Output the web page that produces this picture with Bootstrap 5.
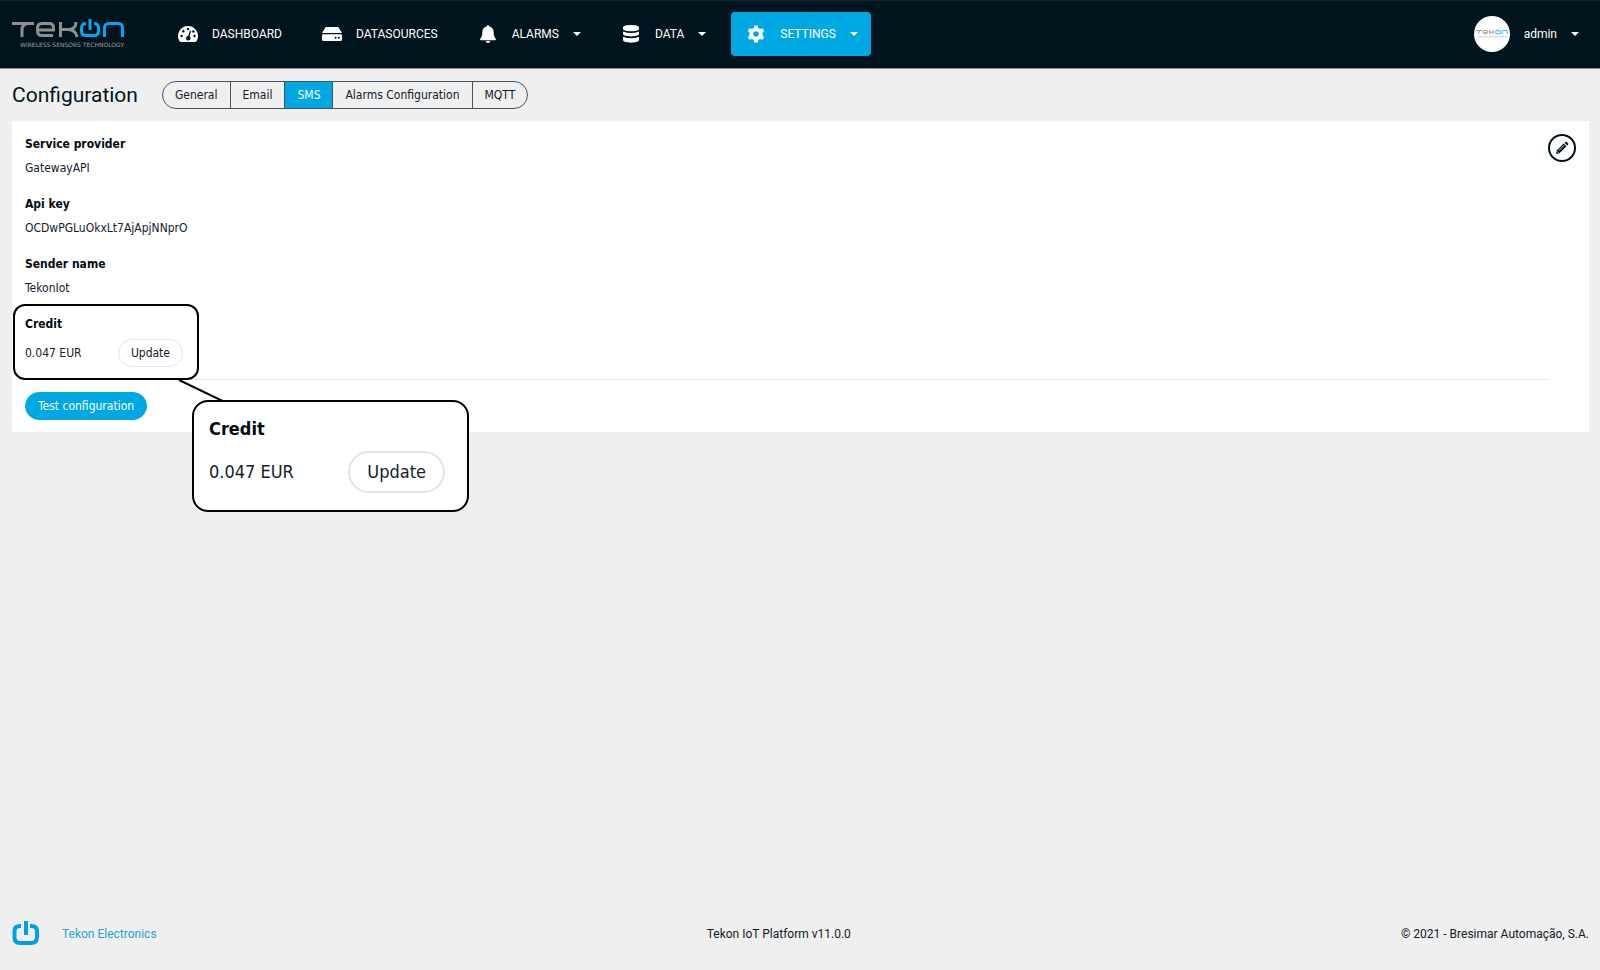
<!DOCTYPE html>
<html lang="en">
<head>
<meta charset="utf-8">
<meta name="viewport" content="width=device-width, initial-scale=1">
<title>Tekon IoT Platform</title>
<link href="https://cdn.jsdelivr.net/npm/bootstrap@5.3.0/dist/css/bootstrap.min.css" rel="stylesheet">
<style>
  :root { --tk-blue: #00a8e3; --tk-dark: #00141d; --tk-font: "DejaVu Sans Condensed", Tahoma, sans-serif; }
  body { background: #efefef; color: #10212b; font: 12px/20px Roboto, sans-serif; }
  .tk-nav { background: var(--tk-dark); min-height: 68px; padding: 0 21px 0 12px; box-shadow: inset 0 1px 0 #0e2631, 0 1px 0 #8a9296; }
  .tk-logo { margin-right: 38px; line-height: 0; }
  .tk-menu { gap: 12px; }
  .tk-link { color: #fff; display: flex; align-items: center; gap: 14px; height: 44px; padding: 0 13px 0 15px; border-radius: 4px; text-decoration: none; white-space: nowrap; }
  .tk-link.active { background: var(--tk-blue); }
  .tk-link svg { width: 20px; height: 20px; }
  .tk-link::after, .tk-user::after { margin: 0 !important; }
  .tk-link.dropdown-toggle::after, .tk-user::after { border-width: 4px 4px 0; border-style: solid; border-color: #fff transparent transparent; }
  .tk-user { background: none; border: 0; color: #fff; display: flex; align-items: center; gap: 14px; padding: 0; }
  .tk-avatar { width: 36px; height: 36px; border-radius: 50%; background: #fff; display: flex; align-items: center; justify-content: center; }
  .tk-head { gap: 24px; padding: 13px 12px 12px; }
  .tk-head h1 { font-size: 21px; line-height: 28px; margin: 0; font-weight: 400; color: #00141d; }
  .tk-form, .tk-tabs, .tk-zoom { font-family: var(--tk-font); }
  .tk-btn { --bs-btn-font-size: 12px; --bs-btn-line-height: 20px; --bs-btn-padding-y: 3px; --bs-btn-padding-x: 12px; --bs-btn-border-radius: 14px; --bs-btn-color: #10212b; --bs-btn-border-color: #46545d; --bs-btn-active-bg: var(--tk-blue); --bs-btn-active-border-color: #46545d; --bs-btn-active-color: #fff; --bs-btn-font-family: var(--tk-font); }
  .tk-btn-light { --bs-btn-border-color: #e1e4e8; --bs-btn-bg: #fff; }
  .tk-btn-blue { --bs-btn-bg: var(--tk-blue); --bs-btn-border-color: var(--tk-blue); --bs-btn-color: #fff; }
  .tk-panel { background: #fff; margin: 0 11px 0 12px; padding: 13px 13px 12px; }
  .tk-form { font-size: 12px; }
  .tk-form dt { font-weight: 700; color: #000b10; margin-bottom: 4px; }
  .tk-form dd { margin-bottom: 16px; }
  .tk-form .tk-credit dd { margin-bottom: 0; }
  .tk-credit { position: relative; z-index: 1; width: 162px; margin-bottom: 12px; }
  .tk-credit dt { margin-bottom: 5px; }
  .tk-credit::before { content: ""; position: absolute; z-index: -1; inset: -10px -12px -13px -12px; background: #fff; border: 2px solid #000; border-radius: 12px; }
  .tk-leader { position: absolute; left: 150px; top: 64px; }
  .tk-zoom { position: absolute; left: 167px; top: 86px; width: 277px; height: 112px; background: #fff; border: 2px solid #000; border-radius: 16px; padding: 14px 22px 12px 15px; font-size: 18px; line-height: 26px; }
  .tk-zoom dt { margin-bottom: 9px; }
  .tk-zoom .tk-btn { --bs-btn-font-size: 18px; --bs-btn-line-height: 26px; --bs-btn-padding-y: 6px; --bs-btn-padding-x: 17px; --bs-btn-border-radius: 21px; --bs-btn-border-width: 2px; }
  .tk-rule { margin: 0 28px 12px 0; border-top: 1px solid #e3e6e8; opacity: 1; }
  .tk-edit { width: 28px; height: 28px; border: 2px solid #00141d; border-radius: 50%; background: #fff; padding: 0; display: flex; align-items: center; justify-content: center; }
  .tk-foot { padding: 0 11px 22px 12px; line-height: 28px; }
  .tk-foot a { color: #2a9fd8; text-decoration: none; }
  .tk-brand { gap: 22px; }
</style>
</head>
<body class="d-flex flex-column min-vh-100">

<svg class="d-none" aria-hidden="true">
  <symbol id="logo-mark" viewBox="0 0 113 20">
    <g fill="none" stroke="#8e8f91" stroke-width="3">
      <path d="M0 4.500H21M10 18V11Q10 4.500 17 4.500H22"/>
      <path d="M41 16.500H30Q25.500 16.500 25.500 12V9Q25.500 4.500 30 4.500H37Q41.500 4.500 41.500 8.500V11H27"/>
      <path d="M48.500 3V18M49 10.500H56Q64 10.500 64 3M56 10.500Q64 11 65 18"/>
    </g>
    <g fill="none" stroke="#00a8f0" stroke-width="3">
      <path d="M74 4.500Q69.500 4.500 69.500 9V12Q69.500 16.500 74 16.500H82Q86.500 16.500 86.500 12V9Q86.500 4.500 82 4.500M78 0V11"/>
      <path d="M92.500 18V9Q92.500 4.500 97 4.500H106Q110.500 4.500 110.500 9V18"/>
    </g>
  </symbol>
</svg>

<nav class="navbar navbar-expand tk-nav">
  <a class="tk-logo" href="#" aria-label="Tekon">
    <svg width="113" height="30" viewBox="0 0 113 30">
      <use href="#logo-mark" width="113" height="20"/>
      <text x="8" y="28" font-family="DejaVu Sans, sans-serif" font-size="6" fill="#a0a2a4">WIRELESS SENSORS TECHNOLOGY</text>
    </svg>
  </a>
  <div class="navbar-nav tk-menu me-auto">
    <a class="tk-link" href="#">
      <svg viewBox="0 0 20 20"><path fill="#fff" d="M10 2A10 10 0 0 0 1.500 17.200Q2 18 3 18H17Q18 18 18.500 17.200A10 10 0 0 0 10 2Z"/><g fill="#00141d"><circle cx="3.500" cy="12" r="1.200"/><circle cx="5.300" cy="7.300" r="1.200"/><circle cx="10" cy="5" r="1.200"/><circle cx="16.500" cy="12" r="1.200"/><circle cx="15.400" cy="7.500" r="1.200"/><path d="M11.900 6.500 13.200 6.900 11.600 12.300A2.300 2.300 0 1 1 10.200 11.900Z"/></g></svg>
      DASHBOARD</a>
    <a class="tk-link" href="#">
      <svg viewBox="0 0 20 20"><path fill="#fff" d="M4.500 3H15.500Q16.300 3 16.800 3.700L20 9H0L3.200 3.700Q3.700 3 4.500 3ZM1 10.200H19Q20 10.200 20 11.200V15.500Q20 17 18.500 17H1.500Q0 17 0 15.500V11.200Q0 10.200 1 10.200Z"/><circle cx="13.600" cy="13.700" r="1" fill="#00141d"/><circle cx="16.800" cy="13.700" r="1" fill="#00141d"/></svg>
      DATASOURCES</a>
    <a class="tk-link dropdown-toggle" href="#">
      <svg viewBox="0 0 20 20"><path fill="#fff" d="M10 1Q11.200 1 11.200 2.600C14.300 3.300 15.700 5.500 15.700 8.500C15.700 12 16.500 13.300 17.600 14.500Q18.500 16 17 16.200H3Q1.500 16 2.400 14.500C3.500 13.300 4.300 12 4.300 8.500C4.300 5.500 5.700 3.300 8.800 2.600Q8.800 1 10 1ZM7.600 17H12.400Q12 19 10 19Q8 19 7.600 17Z"/></svg>
      ALARMS</a>
    <a class="tk-link dropdown-toggle" href="#">
      <svg viewBox="0 0 20 20" fill="#fff"><path d="M2 3.500C2 .3 18 .3 18 3.500V5C18 8 2 8 2 5Z"/><path d="M2 7.400Q10 10.400 18 7.400V10C18 13.200 2 13.200 2 10Z"/><path d="M2 12.700Q10 15.700 18 12.700V16C18 19.500 2 19.500 2 16Z"/></svg>
      DATA</a>
    <a class="tk-link dropdown-toggle active" href="#" aria-current="page">
      <svg viewBox="0 0 20 20"><path fill="#fff" fill-rule="evenodd" d="M8.300 1.500H11.700L12.200 4Q13.200 4.400 14 5L16.500 4.200 18.200 7.100 16.300 8.900Q16.500 10 16.300 11.100L18.200 12.900 16.500 15.800 14 15Q13.200 15.600 12.200 16L11.700 18.500H8.300L7.800 16Q6.800 15.600 6 15L3.500 15.800 1.800 12.900 3.700 11.100Q3.500 10 3.700 8.900L1.800 7.100 3.500 4.200 6 5Q6.800 4.400 7.800 4ZM10 7.200A2.800 2.800 0 1 0 10 12.800 2.800 2.800 0 1 0 10 7.200Z"/></svg>
      SETTINGS</a>
  </div>
  <button type="button" class="tk-user dropdown-toggle">
    <span class="tk-avatar"><svg width="32" height="10" viewBox="0 0 113 34"><use href="#logo-mark" width="113" height="20"/><path d="M10 27H113" stroke="#b5b7b9" stroke-width="3" stroke-dasharray="7 2"/></svg></span>
    admin
  </button>
</nav>

<header class="tk-head d-flex align-items-center">
  <h1>Configuration</h1>
  <div class="btn-group tk-tabs" role="group" aria-label="Configuration sections">
    <button type="button" class="btn tk-btn">General</button>
    <button type="button" class="btn tk-btn">Email</button>
    <button type="button" class="btn tk-btn active">SMS</button>
    <button type="button" class="btn tk-btn">Alarms Configuration</button>
    <button type="button" class="btn tk-btn">MQTT</button>
  </div>
</header>

<main class="tk-panel tk-form">
  <div class="d-flex justify-content-between align-items-start">
    <div>
      <dl class="mb-0">
        <dt>Service provider</dt><dd>GatewayAPI</dd>
        <dt>Api key</dt><dd>OCDwPGLuOkxLt7AjApjNNprO</dd>
        <dt>Sender name</dt><dd>TekonIot</dd>
      </dl>
      <div class="tk-credit">
        <dl class="mb-0">
          <dt>Credit</dt>
          <dd class="d-flex justify-content-between align-items-center">0.047 EUR
            <button type="button" class="btn tk-btn tk-btn-light me-1">Update</button></dd>
        </dl>
        <svg class="tk-leader" width="52" height="26"><path d="M4 2 52 25" stroke="#000" stroke-width="2"/></svg>
        <div class="tk-zoom">
          <dl class="mb-0">
            <dt>Credit</dt>
            <dd class="d-flex justify-content-between align-items-center">0.047 EUR
              <button type="button" class="btn tk-btn tk-btn-light">Update</button></dd>
          </dl>
        </div>
      </div>
    </div>
    <button type="button" class="tk-edit" aria-label="Edit">
      <svg width="14" height="14" viewBox="0 0 14 14"><path fill="#00141d" d="M1 13 1.700 9.500 8.700 2.500 11.500 5.300 4.500 12.300ZM9.400 1.800 10.200 1Q11 .4 11.800 1L13 2.200Q13.600 3 13 3.800L12.200 4.600Z"/><path d="M4 9.300 9 4.300M2.200 10.400 3.600 11.800" stroke="#fff" stroke-width=".8"/></svg>
    </button>
  </div>
  <hr class="tk-rule">
  <button type="button" class="btn tk-btn tk-btn-blue">Test configuration</button>
</main>

<footer class="tk-foot mt-auto d-flex justify-content-between align-items-center">
  <div class="tk-brand d-flex align-items-center">
    <svg width="28" height="26" viewBox="0 0 28 26"><path d="M9 5H8Q2.500 5 2.500 10V16Q2.500 22 8 22H19Q25 22 25 16V10Q25 5 19 5H18M14 0V14" fill="none" stroke="#00a0e3" stroke-width="4"/></svg>
    <a href="#">Tekon Electronics</a>
  </div>
  <div>Tekon IoT Platform v11.0.0</div>
  <div>© 2021 - Bresimar Automação, S.A.</div>
</footer>

<script src="https://cdn.jsdelivr.net/npm/bootstrap@5.3.0/dist/js/bootstrap.bundle.min.js"></script>
</body>
</html>
